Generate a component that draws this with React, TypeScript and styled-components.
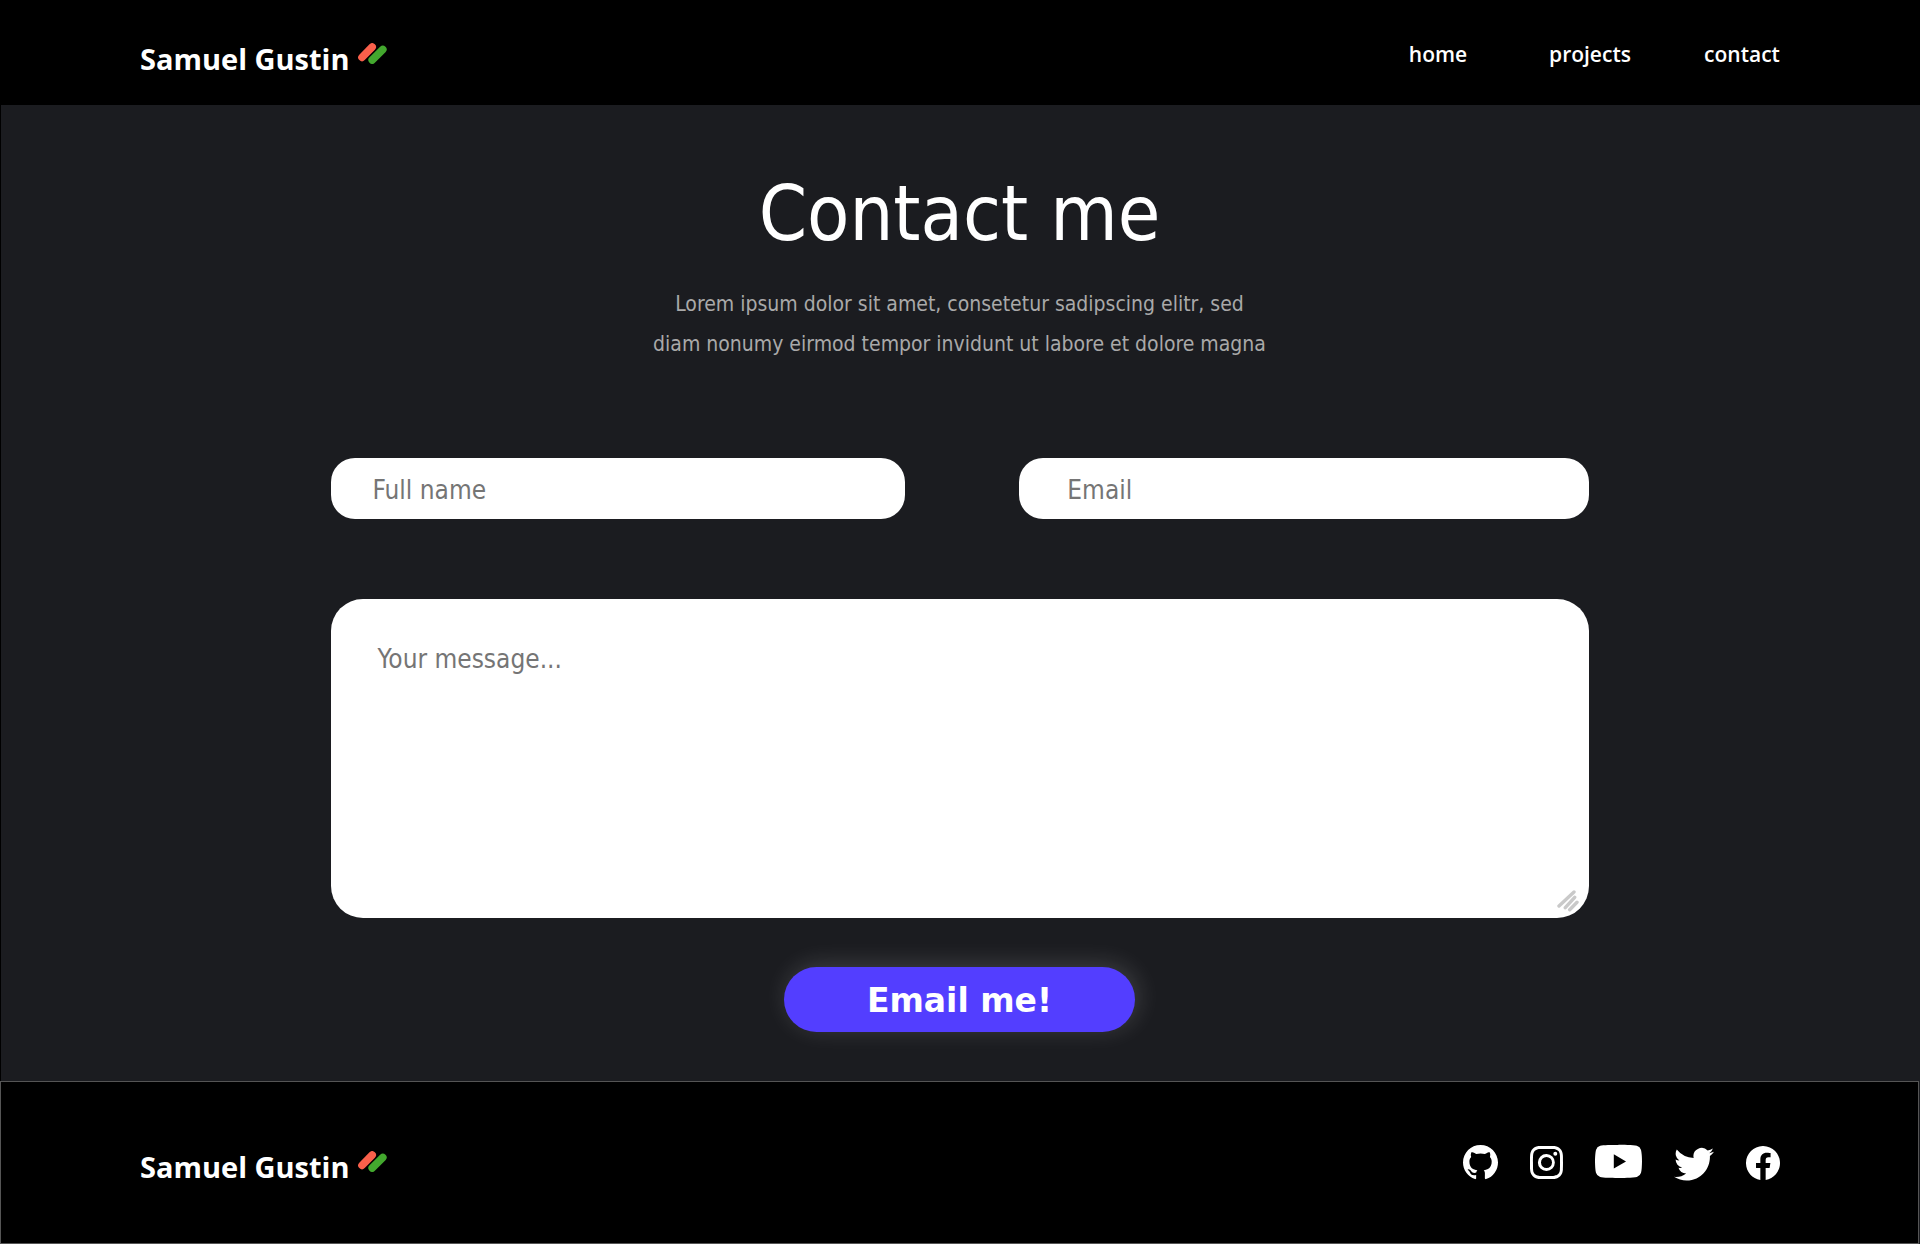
import React from "react";
import styled, { createGlobalStyle } from "styled-components";
import { BsFacebook, BsGithub, BsInstagram, BsTwitter, BsYoutube } from "react-icons/bs";

const GlobalStyle = createGlobalStyle`
  *, *::before, *::after { box-sizing: border-box; }
  body { margin: 0; background: #1b1c20; color: #fff; }
`;

const display = `"DejaVu Sans Condensed", "DejaVu Sans", sans-serif`;
const ui = `"Open Sans", "Noto Sans", sans-serif`;

const Page = styled.div`
  min-height: 100vh;
  display: flex;
  flex-direction: column;
  font-family: ${display};
`;

const Header = styled.header`
  display: flex;
  align-items: center;
  justify-content: space-between;
  min-height: 105px;
  padding: 0 102px 0 140px;
  background: #000;
`;

const BrandLink = styled.a<{ $drop: number }>`
  display: flex;
  align-items: flex-start;
  gap: 8px;
  padding-top: ${(p) => p.$drop}px;
  color: #fff;
  font: 700 29px/36px ${ui};
  text-decoration: none;
  white-space: nowrap;
`;

const Mark = styled.svg`
  width: 29px;
  height: 21px;
  margin-top: 2px;
`;

const Nav = styled.nav`
  display: grid;
  grid-template-columns: repeat(3, 152px);
  padding-top: 2px;
`;

const NavLink = styled.a`
  color: #fff;
  font: 600 21px/32px ${ui};
  text-align: center;
  text-decoration: none;
`;

const Main = styled.main`
  flex: 1;
  display: flex;
  flex-direction: column;
  align-items: center;
  padding: 64px 25px 49px 23px;
  border-left: 1px solid #000;
`;

const Title = styled.h1`
  margin: 0 0 25px;
  font-size: 77px;
  font-weight: 400;
  line-height: 90px;
`;

const Intro = styled.p`
  max-width: 640px;
  margin: 0 0 94px;
  color: #a9a9a9;
  font-size: 21px;
  line-height: 40px;
  text-align: center;
`;

const Form = styled.form`
  display: grid;
  grid-template-columns: 101fr 100fr;
  column-gap: 114px;
  width: 100%;
  max-width: 1258px;
`;

const Field = styled.input<{ $inset: number }>`
  width: 100%;
  height: 61px;
  padding: 2px ${(p) => p.$inset}px 0;
  border: 0;
  border-radius: 24px;
  background: #fff;
  color: #1b1c20;
  font: 400 26px/32px ${display};
  &::placeholder { color: #757575; opacity: 1; }
`;

const MessageBox = styled.div`
  position: relative;
  grid-column: 1 / -1;
  display: flex;
  margin-top: 80px;
`;

const Message = styled.textarea`
  width: 100%;
  height: 319px;
  padding: 44px 47px;
  border: 0;
  border-radius: 32px;
  background: #fff;
  color: #1b1c20;
  font: 400 26px/32px ${display};
  resize: none;
  &::placeholder { color: #757575; opacity: 1; }
`;

const Grip = styled.svg`
  position: absolute;
  right: 10px;
  bottom: 6px;
  width: 22px;
  height: 22px;
  pointer-events: none;
`;

const Submit = styled.button`
  grid-column: 1 / -1;
  justify-self: center;
  width: 351px;
  height: 65px;
  margin-top: 49px;
  padding: 2px 0 0;
  border: 0;
  border-radius: 33px;
  background: #533eff;
  box-shadow: 3px -3px 24px rgba(255, 255, 255, 0.16);
  color: #fff;
  font: 700 33px/40px "DejaVu Sans", sans-serif;
  cursor: pointer;
`;

const Footer = styled.footer`
  display: flex;
  align-items: center;
  justify-content: space-between;
  min-height: 163px;
  margin-right: 1px;
  padding: 0 138px 0 139px;
  border: 1px solid #555;
  background: #000;
`;

const Socials = styled.div`
  display: flex;
  align-items: center;
  gap: 32px;
`;

const SocialLink = styled.a`
  display: flex;
  color: #fff;
`;

const navItems = ["home", "projects", "contact"];

const socials = [
  { name: "GitHub", Icon: BsGithub, size: 35 },
  { name: "Instagram", Icon: BsInstagram, size: 33 },
  { name: "YouTube", Icon: BsYoutube, size: 47 },
  { name: "Twitter", Icon: BsTwitter, size: 40 },
  { name: "Facebook", Icon: BsFacebook, size: 34 },
];

function Brand({ drop }: { drop: number }) {
  return (
    <BrandLink href="#home" $drop={drop}>
      Samuel Gustin
      <Mark viewBox="0 0 29 21" fill="none" strokeWidth="7.6" strokeLinecap="round" aria-hidden="true">
        <path d="M4 14.4 14.2 4" stroke="#f9604b" />
        <path d="M14.2 17 24.8 6.5" stroke="#43a82e" />
      </Mark>
    </BrandLink>
  );
}

export default function App() {
  return (
    <Page>
      <GlobalStyle />
      <Header>
        <Brand drop={12} />
        <Nav>
          {navItems.map((item) => (
            <NavLink key={item} href={`#${item}`}>{item}</NavLink>
          ))}
        </Nav>
      </Header>
      <Main>
        <Title>Contact me</Title>
        <Intro>
          Lorem ipsum dolor sit amet, consetetur sadipscing elitr, sed
          <br />
          diam nonumy eirmod tempor invidunt ut labore et dolore magna
        </Intro>
        <Form onSubmit={(e) => e.preventDefault()}>
          <Field type="text" aria-label="Full name" placeholder="Full name" $inset={42} />
          <Field type="email" aria-label="Email" placeholder="Email" $inset={48} />
          <MessageBox>
            <Message aria-label="Your message" placeholder="Your message..." />
            <Grip viewBox="0 0 22 22" stroke="#c9c9c9" strokeWidth="3.4" strokeLinecap="round" aria-hidden="true">
              <path d="M2 16 17 2M8.3 17.7l9.4-10.4M12.7 19.7l7.3-7.4" />
            </Grip>
          </MessageBox>
          <Submit type="submit">Email me!</Submit>
        </Form>
      </Main>
      <Footer>
        <Brand drop={8} />
        <Socials>
          {socials.map(({ name, Icon, size }) => (
            <SocialLink key={name} href={`#${name.toLowerCase()}`} aria-label={name}>
              <Icon size={size} />
            </SocialLink>
          ))}
        </Socials>
      </Footer>
    </Page>
  );
}
